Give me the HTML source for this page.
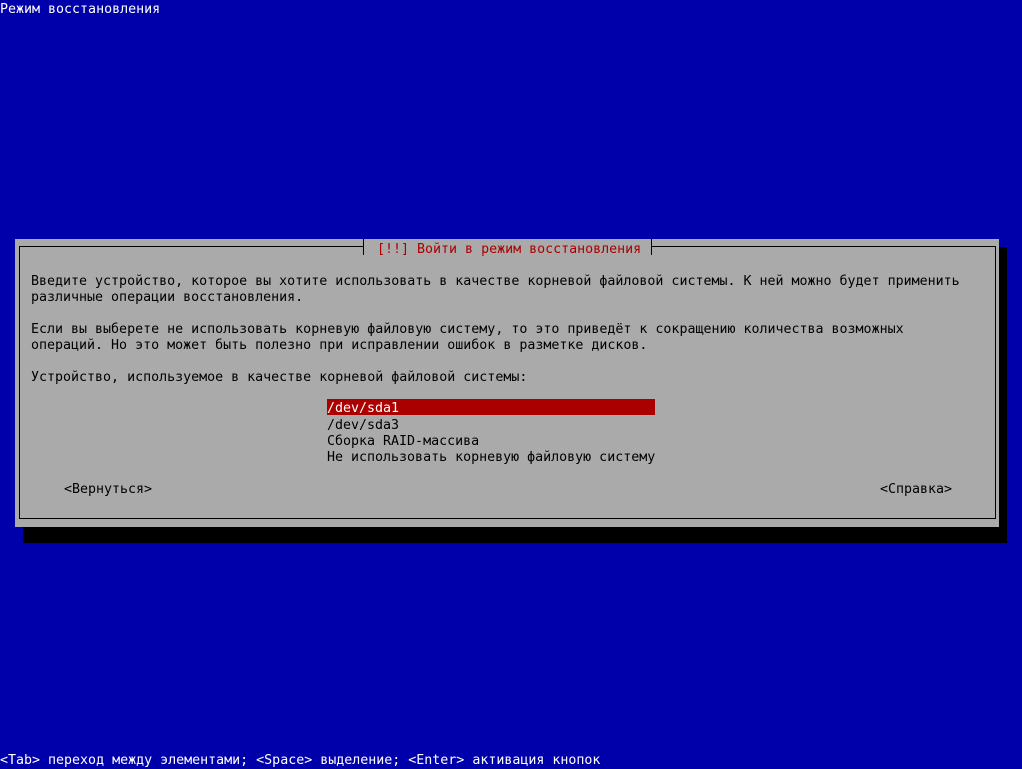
<!DOCTYPE html>
<html><head><meta charset="utf-8"><style>
html,body{margin:0;padding:0}
body{width:1022px;height:767px;background:#0000aa;position:relative;overflow:hidden;font-family:"DejaVu Sans Mono","Liberation Mono",monospace;font-size:13.3px}
.t{position:absolute;white-space:pre;line-height:16px;height:16px;color:#000;margin-top:2px}
.b{position:absolute;background:#000}
</style></head><body>
<div class="t" style="left:0;top:0;color:#fff">Режим восстановления</div>
<div style="position:absolute;left:23px;top:247px;width:984px;height:296px;background:#000"></div>
<div style="position:absolute;left:15px;top:239px;width:984px;height:288px;background:#aaaaaa"></div>
<div class="b" style="left:19px;top:246px;width:345px;height:1px"></div>
<div class="b" style="left:651px;top:246px;width:345px;height:1px"></div>
<div class="b" style="left:19px;top:246px;width:1px;height:273px"></div>
<div class="b" style="left:995px;top:246px;width:1px;height:273px"></div>
<div class="b" style="left:19px;top:518px;width:977px;height:1px"></div>
<div class="b" style="left:363px;top:239px;width:1px;height:16px"></div>
<div class="b" style="left:651px;top:239px;width:1px;height:16px"></div>
<div class="t" style="left:377px;top:240px;color:#aa0000">[!!] Войти в режим восстановления</div>
<div class="t" style="left:31px;top:272px">Введите устройство, которое вы хотите использовать в качестве корневой файловой системы. К ней можно будет применить</div>
<div class="t" style="left:31px;top:288px">различные операции восстановления.</div>
<div class="t" style="left:31px;top:320px">Если вы выберете не использовать корневую файловую систему, то это приведёт к сокращению количества возможных</div>
<div class="t" style="left:31px;top:336px">операций. Но это может быть полезно при исправлении ошибок в разметке дисков.</div>
<div class="t" style="left:31px;top:368px">Устройство, используемое в качестве корневой файловой системы:</div>
<div style="position:absolute;left:327px;top:399px;width:328px;height:16px;background:#aa0000"></div>
<div class="t" style="left:327px;top:399px;color:#fff">/dev/sda1</div>
<div class="t" style="left:327px;top:416px">/dev/sda3</div>
<div class="t" style="left:327px;top:432px">Сборка RAID-массива</div>
<div class="t" style="left:327px;top:448px">Не использовать корневую файловую систему</div>
<div class="t" style="left:64px;top:480px">&lt;Вернуться&gt;</div>
<div class="t" style="left:880px;top:480px">&lt;Справка&gt;</div>
<div class="t" style="left:0;top:751px;color:#fff">&lt;Tab&gt; переход между элементами; &lt;Space&gt; выделение; &lt;Enter&gt; активация кнопок</div>
</body></html>
